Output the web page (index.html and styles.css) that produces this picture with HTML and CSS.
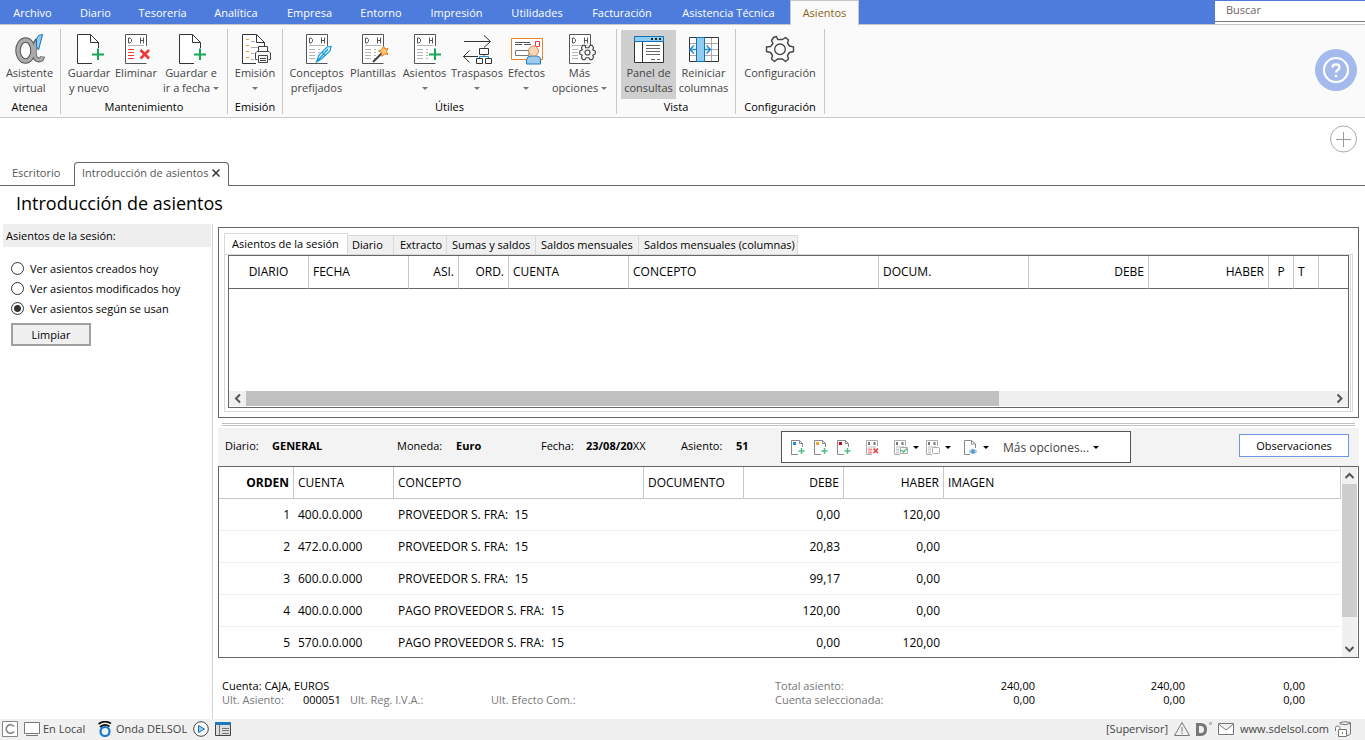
FILE: index.html
```html
<!DOCTYPE html>
<html lang="es">
<head>
<meta charset="utf-8">
<title>Introducción de asientos</title>
<link rel="stylesheet" href="styles.css">
</head>
<body>
<svg class="defs" aria-hidden="true">
  <symbol id="page" viewBox="0 0 32 32">
    <path d="M25.500 15V9.500L17.500 1.500H4.500V30.500H19M17.500 1.500V9.500H25.500" fill="#fff" stroke="#333"/>
    <path d="M25 15.500V27M19 21.500H31" stroke="#17a556" stroke-width="2" fill="none"/>
  </symbol>
  <symbol id="dh" viewBox="0 0 32 32">
    <path d="M26.500 13V1.500H5.500V30.500H26.500" fill="#fff" stroke="#555"/>
    <path d="M8.500 5V10H10L11.500 8.500V6.500L10 5ZM20.500 4.500V10.500M23.500 4.500V10.500M20.500 7.500H23.500" stroke="#555" fill="none"/>
    <path d="M8 12.500H24M8 16.500H14M8 19.500H14M8 22.500H14M8 25.500H14M17 16.500H19M17 19.500H19M17 22.500H19M17 25.500H19" stroke="#b5b5b5" fill="none"/>
  </symbol>
  <symbol id="gear" viewBox="0 0 32 32">
    <path d="M13.700 6.500 12.500 3.500 9.500 4.500 7.500 7.500 9 10.500 6.500 13.500 2.500 14V18.500L6.500 19.500 8.500 22.500 7.500 26 10.500 28.500 13.500 26H18.500L21.500 28.500 24.500 26 23.500 22.500 25.500 19.500 29.500 18.500V14L25.500 13 23.500 10 24.500 7 21.500 4.500 18.500 6.500Z" fill="#fafafa" stroke="#444" stroke-width="1.400" stroke-linejoin="round"/>
    <circle cx="16" cy="16.300" r="5.300" fill="none" stroke="#444" stroke-width="1.300"/>
  </symbol>
  <symbol id="smallgear" viewBox="0 0 18 18">
    <path d="M7 4 6.500 1.500H4L2.500 4 3.500 6 .800 7.300V10.700L3.500 12 2.500 14 4 16.500H6.500L7.500 14.500H10.500L11.500 16.500H14L15.500 14 14.500 12 17.200 10.700V7.300L14.500 6 15.500 4 14 1.500H11.500L10.500 3.800Z" fill="#fafafa" stroke="#444" stroke-width="1.200" stroke-linejoin="round"/>
    <circle cx="9" cy="9" r="2.700" fill="none" stroke="#444" stroke-width="1.200"/>
  </symbol>
  <symbol id="newdoc" viewBox="0 0 16 16">
    <path d="M12.500 8V4.500L9.500 1.500H1.500V15.500H8M9.500 1.500V4.500H12.500" fill="#fff" stroke="#888"/>
    <path d="M11.500 9V15M8.500 12H14.500" stroke="#4fbd7d" stroke-width="1.500" fill="none"/>
  </symbol>
  <symbol id="minidh" viewBox="0 0 16 16">
    <path d="M2.500 7V1.500H13.500V7M2.500 7V15.500H8" fill="#fff" stroke="#aaa"/>
    <path d="M5 3V6M10.500 3V6" stroke="#777" fill="none" stroke-width="2"/>
    <path d="M4 8H12" stroke="#bbb" fill="none"/>
  </symbol>
</svg>

<nav class="menu" aria-label="Menú principal">
  <a href="#">Archivo</a><a href="#">Diario</a><a href="#">Tesorería</a><a href="#">Analítica</a><a href="#">Empresa</a><a href="#">Entorno</a><a href="#">Impresión</a><a href="#">Utilidades</a><a href="#">Facturación</a><a href="#">Asistencia Técnica</a><a href="#" class="current">Asientos</a>
  <input class="search" type="text" placeholder="Buscar" aria-label="Buscar">
</nav>

<section class="ribbon" aria-label="Cinta">
  <div class="group atenea">
    <div class="tools">
      <button><svg viewBox="0 0 32 32"><ellipse cx="11.500" cy="17.500" rx="7.500" ry="10.500" fill="none" stroke="#555" stroke-width="5.500"/><path d="M23.500 7C18.500 14 19 27 25 27Q28 27 28.500 23.500" fill="none" stroke="#555" stroke-width="5"/><ellipse cx="11.500" cy="17.500" rx="7.500" ry="10.500" fill="none" stroke="#aaa" stroke-width="3.500"/><path d="M23.500 8C19 14 19 27 25 27Q28 27 28.300 24" fill="none" stroke="#aaa" stroke-width="3.200"/><path d="M28.500 1.500 24.500 17 22.500 13.500V6L24.500 2.500Z" fill="#90cdf3" stroke="#1671b5"/></svg><span>Asistente<br>virtual</span></button>
    </div><h2>Atenea</h2>
  </div>
  <div class="group mant">
    <div class="tools">
      <button><svg><use href="#page"/></svg><span>Guardar<br>y nuevo</span></button>
      <button><svg viewBox="0 0 32 32"><use href="#dh" width="32" height="32"/><path d="M16 14H27V29H16Z" fill="#fff"/><path d="M8 16.500H14M8 19.500H14M8 22.500H14M8 25.500H14" stroke="#ee3737"/><path d="M20.500 17 29 25.500M29 17 20.500 25.500" stroke="#ee3737" stroke-width="2.600"/></svg><span>Eliminar</span></button>
      <button><svg><use href="#page"/></svg><span>Guardar e<br>ir a fecha <i class="arrow"></i></span></button>
    </div><h2>Mantenimiento</h2>
  </div>
  <div class="group emis">
    <div class="tools">
      <button><svg viewBox="0 0 32 32"><path d="M25.500 13V9.500L17.500 1.500H3.500V30.500H17M17.500 1.500V9.500H25.500" fill="#fff" stroke="#333"/><path d="M7 6.500H10M7 12.500H10M7 18.500H10M7 24.500H10" stroke="#e89a25"/><path d="M12 8.500H16M12 14.500H20M12 20.500H15M12 26.500H15" stroke="#aaa"/><path d="M19.500 18V13.500H28.500V18M18.500 26.500H16.500V20L18 18.500H30L31.500 20V26.500H29.500M19.500 22.500H28.500V29.500H19.500ZM21 25.500H27M21 27.500H27" fill="#fafafa" stroke="#444"/></svg><span>Emisión<br><i class="arrow"></i></span></button>
    </div><h2>Emisión</h2>
  </div>
  <div class="group utiles">
    <div class="tools">
      <button><svg viewBox="0 0 32 32"><use href="#dh" width="32" height="32"/><path d="M15.500 29 18 22 26 14 30 13.500 29 18 21 25.500ZM15.500 29 27 16M21 19 24.500 22.500" fill="#e8f7ff" stroke="#169bd7" stroke-width="1.200"/></svg><span>Conceptos<br>prefijados</span></button>
      <button><svg viewBox="0 0 32 32"><use href="#dh" width="32" height="32"/><path d="M16 29 25 20" stroke="#444" stroke-width="2"/><path d="M26.500 13 28 16 31 15.500 29.500 18.500 31 21.500 27.500 21 25 23.500 24.500 19.500 21.500 18 25 16.500Z" fill="#ffc572" stroke="#dd7b22"/></svg><span>Plantillas</span></button>
      <button><svg viewBox="0 0 32 32"><use href="#dh" width="32" height="32"/><path d="M26 15.500V27M20 21.500H32" stroke="#17a556" stroke-width="2"/></svg><span>Asientos<br><i class="arrow"></i></span></button>
      <button><svg viewBox="0 0 32 32"><path d="M3 8.500H29M23 2.500 29.500 8.500 23 14.500M17 23.500H2M8.500 17.500 2.500 23.500 8.500 29.500M18.500 15.500H27.500V21.500H18.500ZM15.500 25.500H21.500V30.500H15.500ZM24.500 25.500H30.500V30.500H24.500Z" fill="none" stroke="#333"/><path d="M18.500 25V23.500H27.500V25M23 22V23.500" fill="none" stroke="#268bd0"/></svg><span>Traspasos<br><i class="arrow"></i></span></button>
      <button><svg viewBox="0 0 32 32"><path d="M.500 5.500H31.500V26.500H.500Z" fill="#fff" stroke="#e98325"/><path d="M4 9.500H19M4 11.500H11M13 11.500H20" stroke="#555"/><path d="M4.500 17.500H18V22.500H4.500Z" fill="#fff" stroke="#777"/><path d="M24.500 8.500H28.500V13.500H24.500Z" fill="#fff" stroke="#e53935"/><path d="M15.500 31V27Q16 23 20 23H25Q29.500 23 29.500 27V31Z" fill="#9ccbee" stroke="#277bb7"/><circle cx="22.500" cy="18" r="5" fill="#f7d5b5" stroke="#ca8d58"/></svg><span>Efectos<br><i class="arrow"></i></span></button>
      <button><svg viewBox="0 0 32 32"><use href="#dh" width="32" height="32"/><use href="#smallgear" x="15" y="11" width="17" height="17"/></svg><span>Más<br>opciones <i class="arrow"></i></span></button>
    </div><h2>Útiles</h2>
  </div>
  <div class="group vista">
    <div class="tools">
      <button class="pressed"><svg viewBox="0 0 32 32"><path d="M1.500 3.500H30.500V29.500H1.500Z" fill="#fff" stroke="#333"/><path d="M1.500 3.500H30.500V8.500H1.500Z" fill="#90cdf3" stroke="#1671b5"/><path d="M18 6H20M22 6H24M26 6H28" stroke="#222" stroke-width="2"/><path d="M9.500 9V29" stroke="#333"/><path d="M13 12.500H27M13 15.500H27M13 18.500H27M13 21.500H27M18 26.500H22M24 26.500H27" stroke="#666"/></svg><span>Panel de<br>consultas</span></button>
      <button><svg viewBox="0 0 32 32"><path d="M1.500 4.500H30.500V28.500H1.500Z" fill="#fff"/><path d="M2 10.500H30M2 16.500H30M2 22.500H30M23.500 5V28" stroke="#aaa"/><path d="M1.500 4.500H30.500V28.500H1.500Z" fill="none" stroke="#333"/><path d="M8.500 4.500H16.500V28.500H8.500Z" fill="#90cdf3" stroke="#1671b5"/><path d="M8 16.500H2M6 12.500 2 16.500 6 20.500M17 16.500H22M18.500 12.500 22.500 16.500 18.500 20.500" fill="none" stroke="#268bd0" stroke-width="1.500"/></svg><span>Reiniciar<br>columnas</span></button>
    </div><h2>Vista</h2>
  </div>
  <div class="group conf">
    <div class="tools"><button><svg><use href="#gear"/></svg><span>Configuración</span></button></div><h2>Configuración</h2>
  </div>
  <button class="help" aria-label="Ayuda"><svg viewBox="0 0 42 42"><circle cx="21" cy="21" r="21" fill="#a4baed"/><circle cx="21" cy="21" r="12" fill="none" stroke="#fff" stroke-width="2.200"/><path d="M17.500 18.500Q17.500 15.300 21 15.300T24.500 18.500C24.500 21 21 20.500 21 23.500" fill="none" stroke="#fff" stroke-width="2.200"/><circle cx="21" cy="27" r="1.300" fill="#fff"/></svg></button>
</section>

<div class="addbar"><button class="add" aria-label="Añadir"><svg viewBox="0 0 28 28"><circle cx="13.500" cy="14" r="13" fill="#fff" stroke="#aaa"/><path d="M13.500 7V22M6 14.500H21" stroke="#999"/></svg></button></div>
<div class="doctabs">
  <a href="#">Escritorio</a>
  <div class="active"><a href="#">Introducción de asientos</a><button aria-label="Cerrar"><svg viewBox="0 0 8 8"><path d="M.500 .500 7.500 7.500M7.500 .500.500 7.500" stroke="#333" stroke-width="1.500"/></svg></button></div>
</div>
<h1>Introducción de asientos</h1>

<main class="body">
  <aside class="side">
    <h2>Asientos de la sesión:</h2>
    <div class="radios">
      <label><input type="radio" name="ver">Ver asientos creados hoy</label>
      <label><input type="radio" name="ver">Ver asientos modificados hoy</label>
      <label><input type="radio" name="ver" checked>Ver asientos según se usan</label>
    </div>
    <button class="clear">Limpiar</button>
  </aside>

  <div class="work">
    <section class="session">
      <div class="tabs">
        <button class="on">Asientos de la sesión</button><button>Diario</button><button>Extracto</button><button>Sumas y saldos</button><button>Saldos mensuales</button><button>Saldos mensuales (columnas)</button>
      </div>
      <div class="frame"><div class="grid">
        <table>
          <colgroup><col class="w80"><col class="w100"><col class="w50"><col class="w50"><col class="w120"><col class="w250"><col class="w150"><col class="w120"><col class="w120"><col class="w25"><col class="w25"><col></colgroup>
          <thead><tr><th class="mid">DIARIO</th><th>FECHA</th><th class="num">ASI.</th><th class="num">ORD.</th><th>CUENTA</th><th>CONCEPTO</th><th>DOCUM.</th><th class="num">DEBE</th><th class="num">HABER</th><th class="mid">P</th><th>T</th><th></th></tr></thead>
        </table>
        <div class="hscroll"><svg viewBox="0 0 17 15"><path d="M11 3.500 7 7.500 11 11.500" fill="none" stroke="#555" stroke-width="2"/></svg><div class="track"><div class="thumb"></div></div><svg viewBox="0 0 17 15"><path d="M6.500 3.500 10.500 7.500 6.500 11.500" fill="none" stroke="#555" stroke-width="2"/></svg></div>
      </div></div>
    </section>
    <div class="splitter"></div>
    <section class="entry">
      <div class="fields">
        <span>Diario:</span><b>GENERAL</b><span>Moneda:</span><b>Euro</b><span>Fecha:</span><span><b>23/08/20</b>XX</span><span>Asiento:</span><b>51</b>
        <div class="toolbar">
          <button aria-label="Nuevo asiento"><svg viewBox="0 0 16 16"><use href="#newdoc" width="16" height="16"/><path d="M3 3H6V6H3Z" fill="#1595dc"/></svg></button>
          <button aria-label="Nuevo apunte"><svg viewBox="0 0 16 16"><use href="#newdoc" width="16" height="16"/><path d="M3 3H6V6H3Z" fill="#f5a623"/></svg></button>
          <button aria-label="Insertar apunte"><svg viewBox="0 0 16 16"><use href="#newdoc" width="16" height="16"/><path d="M3 3H6V6H3Z" fill="#d0021b"/></svg></button>
          <button class="wide" aria-label="Eliminar apunte"><svg viewBox="0 0 16 16"><use href="#minidh" width="16" height="16"/><path d="M4 10.500H8M4 13.500H8" stroke="#ff8a8a" stroke-width="2"/><path d="M9.500 9.500 14 14M14 9.500 9.500 14" stroke="#ee3737" stroke-width="1.500"/></svg></button>
          <button class="drop" aria-label="Marcar"><svg viewBox="0 0 16 16"><use href="#minidh" width="16" height="16"/><path d="M4 10.500H7M4 13.500H7" stroke="#ccc" stroke-width="2"/><path d="M8.500 8.500H15.500V14.500H8.500Z" fill="#fff" stroke="#aaa"/><path d="M9.500 11 11.500 13 15 9.500" fill="none" stroke="#4fbd7d" stroke-width="1.500"/></svg><i class="arrow"></i></button>
          <button class="drop" aria-label="Desmarcar"><svg viewBox="0 0 16 16"><use href="#minidh" width="16" height="16"/><path d="M4 10.500H7M4 13.500H7" stroke="#ccc" stroke-width="2"/><rect x="8.500" y="8.500" width="7" height="6" rx="1" fill="#fff" stroke="#aaa"/></svg><i class="arrow"></i></button>
          <button class="drop eye" aria-label="Ver documento"><svg viewBox="0 0 16 16"><path d="M13.500 9V5L9.500 1.500H2.500V15.500H8M9.500 1.500V5H13.500" fill="#fff" stroke="#888"/><path d="M7 12.500Q11 8 15 12.500 11 16.500 7 12.500Z" fill="#b8d6ec" stroke="#8bb5d5"/><circle cx="11" cy="12.500" r="1.700" fill="#4f93c4"/></svg><i class="arrow"></i></button>
          <button class="more">Más opciones... <i class="arrow"></i></button>
        </div>
        <button class="notes">Observaciones</button>
      </div>
      <div class="lines">
        <table>
          <colgroup><col class="w75"><col class="w100"><col class="w250"><col class="w100"><col class="w100"><col class="w100"><col></colgroup>
          <thead><tr><th class="num strong">ORDEN</th><th>CUENTA</th><th>CONCEPTO</th><th>DOCUMENTO</th><th class="num">DEBE</th><th class="num">HABER</th><th>IMAGEN</th></tr></thead>
          <tbody>
            <tr><td class="num">1</td><td>400.0.0.000</td><td>PROVEEDOR S. FRA:  15</td><td></td><td class="num">0,00</td><td class="num">120,00</td><td></td></tr>
            <tr><td class="num">2</td><td>472.0.0.000</td><td>PROVEEDOR S. FRA:  15</td><td></td><td class="num">20,83</td><td class="num">0,00</td><td></td></tr>
            <tr><td class="num">3</td><td>600.0.0.000</td><td>PROVEEDOR S. FRA:  15</td><td></td><td class="num">99,17</td><td class="num">0,00</td><td></td></tr>
            <tr><td class="num">4</td><td>400.0.0.000</td><td>PAGO PROVEEDOR S. FRA:  15</td><td></td><td class="num">120,00</td><td class="num">0,00</td><td></td></tr>
            <tr><td class="num">5</td><td>570.0.0.000</td><td>PAGO PROVEEDOR S. FRA:  15</td><td></td><td class="num">0,00</td><td class="num">120,00</td><td></td></tr>
          </tbody>
        </table>
        <div class="vscroll"><svg viewBox="0 0 15 17"><path d="M3.500 11 7.500 7 11.500 11" fill="none" stroke="#555" stroke-width="2"/></svg><div class="track"><div class="thumb"></div></div><svg viewBox="0 0 15 17"><path d="M3.500 7 7.500 11 11.500 7" fill="none" stroke="#555" stroke-width="2"/></svg></div>
      </div>
      <div class="summary">
        <span class="account">Cuenta: CAJA, EUROS</span><span class="dim">Total asiento:</span><span class="r">240,00</span><span class="r">240,00</span><span class="r">0,00</span>
        <span class="dim">Ult. Asiento:</span><span>000051</span><span class="dim">Ult. Reg. I.V.A.:</span><span class="dim">Ult. Efecto Com.:</span><span class="dim">Cuenta seleccionada:</span><span class="r">0,00</span><span class="r">0,00</span><span class="r">0,00</span>
      </div>
    </section>
  </div>
</main>

<footer class="status">
  <svg viewBox="0 0 16 16"><path d="M.500 .500H15.500V15.500H.500Z" fill="#fff" stroke="#888"/><path d="M12 5.500A4.300 4.300 0 1 0 12 10.500" fill="none" stroke="#888" stroke-width="1.700"/></svg>
  <div class="item local"><svg viewBox="0 0 16 16"><path d="M.500 1.500H15.500V12.500H.500ZM2 14.500H14" fill="#fff" stroke="#777"/></svg>En Local</div>
  <div class="item onda"><svg viewBox="0 0 16 16"><circle cx="8" cy="10.500" r="4.500" fill="none" stroke="#1478cf" stroke-width="2.200"/><path d="M1.500 3Q8-1.500 14 2.500M3 6Q8 2 12.500 5.500" fill="none" stroke="#111" stroke-width="1.700"/></svg>Onda DELSOL</div>
  <svg viewBox="0 0 16 16"><circle cx="8" cy="8" r="7.300" fill="#fff" stroke="#444"/><path d="M5.500 4.500 11.500 8 5.500 11.500Z" fill="#90cdf3" stroke="#1671b5"/></svg>
  <svg viewBox="0 0 16 16"><path d="M.500 1.500H15.500V14.500H.500Z" fill="#ddd" stroke="#444"/><path d="M0 1H16V4H0Z" fill="#2377b9"/><path d="M4.500 4V14M7 7.500H14M7 9.500H14M7 12.500H14" stroke="#777"/></svg>
  <span class="user">[Supervisor]</span>
  <svg viewBox="0 0 16 16"><path d="M8 1.500 15.500 14.500H.500Z" fill="none" stroke="#777"/><path d="M8 6V10.500M8 11.500V13" stroke="#777"/></svg>
  <svg viewBox="0 0 16 16"><path d="M1.500 3.500H5Q9.500 3.500 9.500 8.500T5 13.500H1.500Z" fill="none" stroke="#777" stroke-width="3"/><path d="M13 1H16V4H13Z" fill="#bbb"/></svg>
  <svg viewBox="0 0 16 16"><path d="M.500 2.500H15.500V13.500H.500ZM.500 3 8 9 15.500 3" fill="#fff" stroke="#777"/></svg>
  <a href="#">www.sdelsol.com</a>
  <svg viewBox="0 0 16 16"><path d="M5 3V1.500Q10 0 15.500 1.500V13Q14 14.500 12 14.500M5 3Q10 4.500 15.500 2.500" fill="none" stroke="#777"/><path d="M3.500 8.500H11.500V15.500H3.500ZM.500 10V6.500Q.500 5 2.500 5T5 6.500V8.500M7.500 11V13" fill="#fff" stroke="#777"/></svg>
</footer>
</body>
</html>
```
FILE: styles.css
```css
* { box-sizing: border-box; }
body { margin: 0; min-height: 100vh; display: flex; flex-direction: column; background: #fff; color: #000; font: 11px/15px "Open Sans", "Noto Sans", sans-serif; }
.defs { display: none; }
h1, h2 { margin: 0; font-weight: 400; }
button, input { font: inherit; color: inherit; }
button { border: 0; padding: 0; background: none; }
a { color: inherit; text-decoration: none; }
svg { display: block; flex: none; }

.menu { height: 25px; display: grid; grid-template-columns: 65px 61px 73px 74px 73px 70px 81px 80px 90px 123px 69px 1fr; background: #4d7cdd; border-bottom: 1px solid #c8c8c8; color: #fff; line-height: 25px; text-align: center; white-space: nowrap; }
.menu .current { height: 25px; background: #fafafa; border: 1px solid #c8c8c8; border-bottom: 0; color: #8a6414; line-height: 24px; }
.search { justify-self: end; width: 150px; height: 21px; margin-top: 1px; padding: 0 11px 3px; border: 0; border-bottom: 1px solid #777; border-radius: 0; background: #fff; outline: 0; box-shadow: 0 2px #fff; }
.search::placeholder { color: #666; opacity: 1; }

.ribbon { display: flex; height: 93px; padding: 4px 0 3px; background: #fafafa; border-bottom: 1px solid #c8c8c8; }
.group { display: flex; flex-direction: column; justify-content: space-between; border-right: 1px solid #c8c8c8; }
.group h2 { font-size: 11px; line-height: 14px; text-align: center; }
.tools { display: grid; justify-content: center; padding-top: 1px; }
.tools button { display: flex; flex-direction: column; align-items: center; justify-content: flex-start; height: 69px; padding-top: 3px; color: #444; text-align: center; white-space: nowrap; }
.tools svg { width: 32px; height: 32px; }
.tools .pressed { background: #cfcfcf; }
.atenea { width: 61px; padding-right: 1px; } .atenea .tools { grid-template-columns: 58px; }
.mant { width: 167px; } .mant .tools { grid-template-columns: 50px 44px 66px; }
.emis { width: 55px; } .emis .tools { grid-template-columns: 54px; }
.utiles { width: 334px; } .utiles .tools { grid-template-columns: 58px 55px 48px 57px 42px 64px; }
.vista { width: 119px; } .vista .tools { grid-template-columns: 55px 55px; }
.conf { width: 89px; } .conf .tools { grid-template-columns: 88px; }
.arrow { display: inline-block; border: 3px solid transparent; border-top-color: #777; border-bottom: 0; vertical-align: 2px; }
.help { align-self: flex-start; width: 42px; height: 42px; margin: 20px 8px 0 auto; }

.addbar { display: flex; justify-content: flex-end; padding: 7px 7px 0; height: 44px; }
.add { width: 28px; height: 28px; }
.doctabs { display: flex; border-bottom: 1px solid #666; height: 24px; padding-left: 12px; color: #555; line-height: 22px; }
.doctabs .active { display: flex; align-items: center; gap: 4px; height: 24px; margin-left: 14px; padding: 0 8px 3px 7px; border: 1px solid #666; border-bottom: 0; border-radius: 4px 4px 0 0; background: #fff; }
.doctabs > a { width: 48px; }
.doctabs svg { width: 8px; height: 8px; }
h1 { padding: 4px 16px 7px; font-size: 18px; line-height: 27px; }

.body { flex: 1; display: flex; min-height: 0; }
.side { width: 213px; padding-left: 3px; border-right: 1px solid #d4d4d4; }
.side h2 { margin-right: 1px; padding: 0 3px; background: #eee; font-size: 11px; line-height: 23px; }
.radios { padding: 11px 0 5px 8px; }
.radios label { display: flex; align-items: center; gap: 6px; height: 20px; }
.radios input { appearance: none; width: 13px; height: 13px; margin: 0; border: 1px solid #333; border-radius: 50%; background: #fff; }
.radios input:checked { background: radial-gradient(circle, #333 0 3px, #fff 4px); }
.clear { width: 80px; height: 23px; margin-left: 8px; border: 2px solid #a0a0a0; background: #f0f0f0; }

.work { flex: 1; min-width: 0; display: flex; flex-direction: column; padding: 3px 6px 0 5px; }
.session { flex: 1; display: flex; flex-direction: column; border: 1px solid #666; padding: 5px; min-height: 120px; }
.tabs { display: flex; align-items: flex-end; height: 21px; }
.tabs button { width: 46px; height: 19px; padding: 0 0 0 4px; background: #f0f0f0; border: 1px solid #d9d9d9; border-left: 0; border-bottom: 0; line-height: 18px; text-align: left; white-space: nowrap; }
.tabs .on { height: 21px; width: 124px; padding-left: 7px; border-left: 1px solid #d9d9d9; background: #fff; line-height: 18px; }
.tabs button:nth-child(3) { width: 53px; padding-left: 6px; }
.tabs button:nth-child(4) { width: 89px; padding-left: 5px; }
.tabs button:nth-child(5) { width: 103px; padding-left: 5px; }
.tabs button:nth-child(6) { width: 159px; padding-left: 5px; }
.frame { flex: 1; display: flex; border: 1px solid #d9d9d9; border-right: 3px double #d9d9d9; padding: 0 1px 3px 3px; }
.grid { flex: 1; display: flex; flex-direction: column; border: 1px solid #666; }
table { width: 100%; border-collapse: separate; border-spacing: 0; table-layout: fixed; font-size: 12px; line-height: 16px; }
th, td { padding: 0 4px; text-align: left; font-weight: 400; white-space: pre; }
th { height: 32px; border-right: 1px solid #c8c8c8; }
th.mid { text-align: center; } .num, th.num { text-align: right; } th.strong { font-weight: 700; }
.grid th { height: 33px; border-bottom: 1px solid #666; }
.w25 { width: 25px; } .w50 { width: 50px; } .w75 { width: 75px; } .w80 { width: 80px; } .w100 { width: 100px; } .w120 { width: 120px; } .w150 { width: 150px; } .w250 { width: 250px; }
.grid th:last-child { border-right: 0; }
.hscroll { display: flex; height: 15px; margin-top: auto; margin-bottom: 1px; background: #f0f0f0; }
.hscroll svg { width: 17px; height: 15px; }
.hscroll .track { flex: 1; } .hscroll .thumb { width: 69.4%; height: 15px; background: #c0c0c0; }

.splitter { height: 3px; margin: 5px 4px 2px; border: 1px solid #c0c0c0; border-width: 1px 0; }
.fields { display: grid; grid-template-columns: 47px 125px 59px 85px 45px 95px 55px 45px 350px 1fr; align-items: center; height: 38px; padding: 0 10px 0 7px; background: #f3f3f3; }
.fields > span, .fields > b { padding-bottom: 3px; }
.toolbar { display: flex; align-items: center; height: 32px; padding-left: 8px; border: 1px solid #555; background: #fff; color: #444; }
.toolbar button { display: flex; align-items: center; width: 23px; }
.toolbar svg { width: 16px; height: 16px; }
.toolbar .wide { width: 28px; margin-left: 5px; }
.toolbar .drop { width: 32px; gap: 5px; } .toolbar .eye { width: 41px; margin-left: 6px; gap: 5px; }
.toolbar .more { width: auto; gap: 4px; font-size: 12px; }
.toolbar .arrow { border-top-color: #000; }
.notes { justify-self: end; width: 110px; height: 23px; margin-bottom: 3px; background: #fff; border: 1px solid #6f95e2; }
.lines { display: flex; border: 1px solid #666; }
.lines table { flex: 1; width: 0; }
.lines th { border-bottom: 1px solid #c8c8c8; }
.lines td { height: 32px; border-bottom: 1px solid #eee; }
.lines tr:last-child td { height: 30px; padding-top: 2px; border-bottom: 0; }
.vscroll { display: flex; flex-direction: column; width: 15px; margin: 0 1px; background: #f0f0f0; }
.vscroll svg { width: 15px; height: 17px; }
.vscroll .track { flex: 1; } .vscroll .thumb { height: 85%; background: #cdcdcd; }
.summary { display: grid; grid-template-columns: 81px 47px 141px 284px 110px 150px 150px 120px; padding: 21px 4px 12px; line-height: 14px; white-space: nowrap; }
.account { grid-column: span 4; } .dim { color: #777; } .r { text-align: right; }

.status { display: flex; align-items: center; gap: 6px; height: 21px; padding: 0 14px 2px 2px; background: #f0f0f0; color: #444; }
.status svg { width: 16px; height: 16px; }
.item { display: flex; align-items: center; gap: 3px; }
.local { width: 67px; } .onda { width: 90px; white-space: nowrap; }
.user { margin-left: auto; }
```
